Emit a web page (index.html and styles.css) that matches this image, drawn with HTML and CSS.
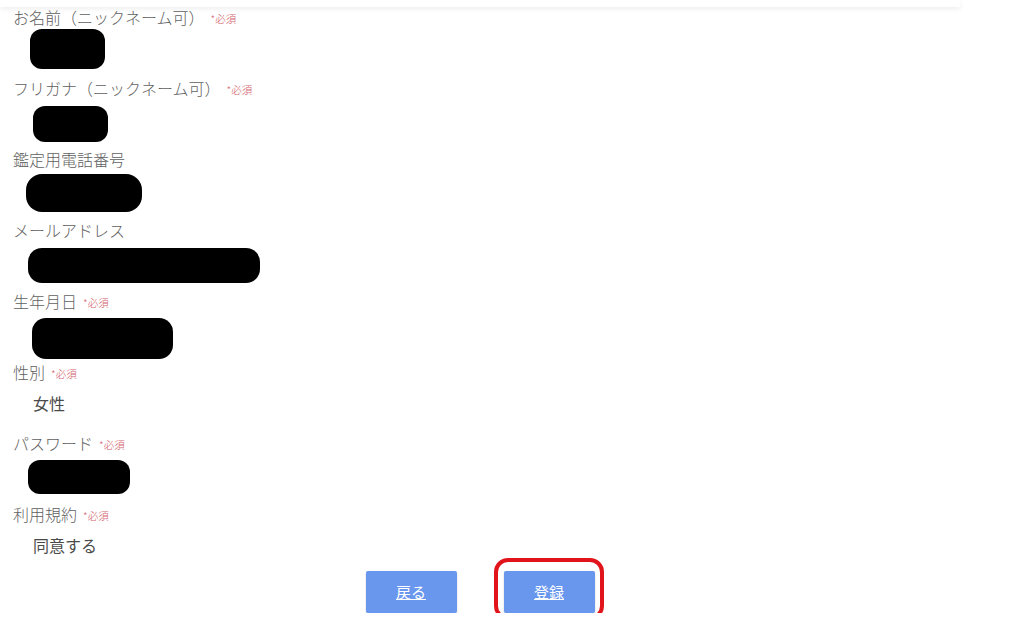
FILE: index.html
```html
<!DOCTYPE html>
<html lang="ja">
<head>
    <meta charset="UTF-8">
    <meta name="viewport" content="width=device-width, initial-scale=1.0">
    <title>会員登録 確認</title>
    <link rel="stylesheet" href="styles.css">
</head>
<body>

    <div class="page">
        <div class="topbar"></div>

        <form class="confirm-form">
            <div class="field">
                <div class="label">お名前（ニックネーム可）<span class="req">*必須</span></div>
                <div class="value"><span class="redact r-name"></span></div>
            </div>

            <div class="field">
                <div class="label">フリガナ（ニックネーム可）<span class="req">*必須</span></div>
                <div class="value"><span class="redact r-kana"></span></div>
            </div>

            <div class="field">
                <div class="label">鑑定用電話番号</div>
                <div class="value"><span class="redact r-tel"></span></div>
            </div>

            <div class="field">
                <div class="label">メールアドレス</div>
                <div class="value"><span class="redact r-mail"></span></div>
            </div>

            <div class="field">
                <div class="label">生年月日<span class="req">*必須</span></div>
                <div class="value"><span class="redact r-birth"></span></div>
            </div>

            <div class="field">
                <div class="label">性別<span class="req">*必須</span></div>
                <div class="value"><span class="text">女性</span></div>
            </div>

            <div class="field">
                <div class="label">パスワード<span class="req">*必須</span></div>
                <div class="value"><span class="redact r-pass"></span></div>
            </div>

            <div class="field">
                <div class="label">利用規約<span class="req">*必須</span></div>
                <div class="value"><span class="text">同意する</span></div>
            </div>
        </form>

        <div class="actions">
            <a class="btn" href="#">戻る</a>
            <a class="btn btn-submit" href="#">登録</a>
        </div>
    </div>

</body>
</html>
```

FILE: styles.css
```css
body {
    margin: 0;
    background: #ffffff;
    font-family: "Noto Sans CJK JP", "Liberation Serif", serif;
    color: #5f5f5f;
}

.page {
    width: 960px;
}

.topbar {
    height: 7px;
    background: #ffffff;
    box-shadow: 0 2px 5px rgba(0, 0, 0, 0.07);
}

.confirm-form {
    padding-left: 13px;
}

.field {
    height: 71px;
    display: flex;
    flex-direction: column;
}

.label {
    height: 20px;
    line-height: 20px;
    font-size: 16px;
    font-weight: 300;
    color: #5f5f5f;
    white-space: nowrap;
}

.req {
    margin-left: 6px;
    font-size: 10.5px;
    color: #d2606a;
    vertical-align: 1px;
}

.value {
    flex: 1;
    display: flex;
    align-items: center;
}

.text {
    margin-left: 20px;
    margin-top: -10px;
    font-size: 16px;
    color: #4a4a4a;
}

/* blacked-out entries */
.redact {
    display: block;
    background: #000000;
    border-radius: 12px;
}

.r-name  { width: 75px;  height: 40px; margin-left: 17px; margin-top: -8px; }
.r-kana  { width: 75px;  height: 36px; margin-left: 20px; }
.r-tel   { width: 116px; height: 38px; margin-left: 13px; margin-top: -4px; border-radius: 16px; }
.r-mail  { width: 232px; height: 35px; margin-left: 15px; border-radius: 14px; }
.r-birth { width: 141px; height: 41px; margin-left: 19px; margin-top: 4px; border-radius: 14px; }
.r-pass  { width: 102px; height: 34px; margin-left: 15px; margin-top: -4px; }

.actions {
    display: flex;
    justify-content: center;
    gap: 47px;
    margin-top: -4px;
}

.btn {
    position: relative;
    display: block;
    width: 91px;
    height: 42px;
    line-height: 42px;
    text-align: center;
    background: #6a97ee;
    color: #ffffff;
    font-size: 15px;
    border-radius: 2px;
    box-shadow: 0 1px 2px rgba(0, 0, 0, 0.2);
}

/* red highlight drawn around the submit button */
.btn-submit::after {
    content: "";
    position: absolute;
    top: -13px;
    left: -10px;
    right: -9px;
    bottom: -7px;
    border: 4px solid #e1141c;
    border-radius: 14px;
}
```
